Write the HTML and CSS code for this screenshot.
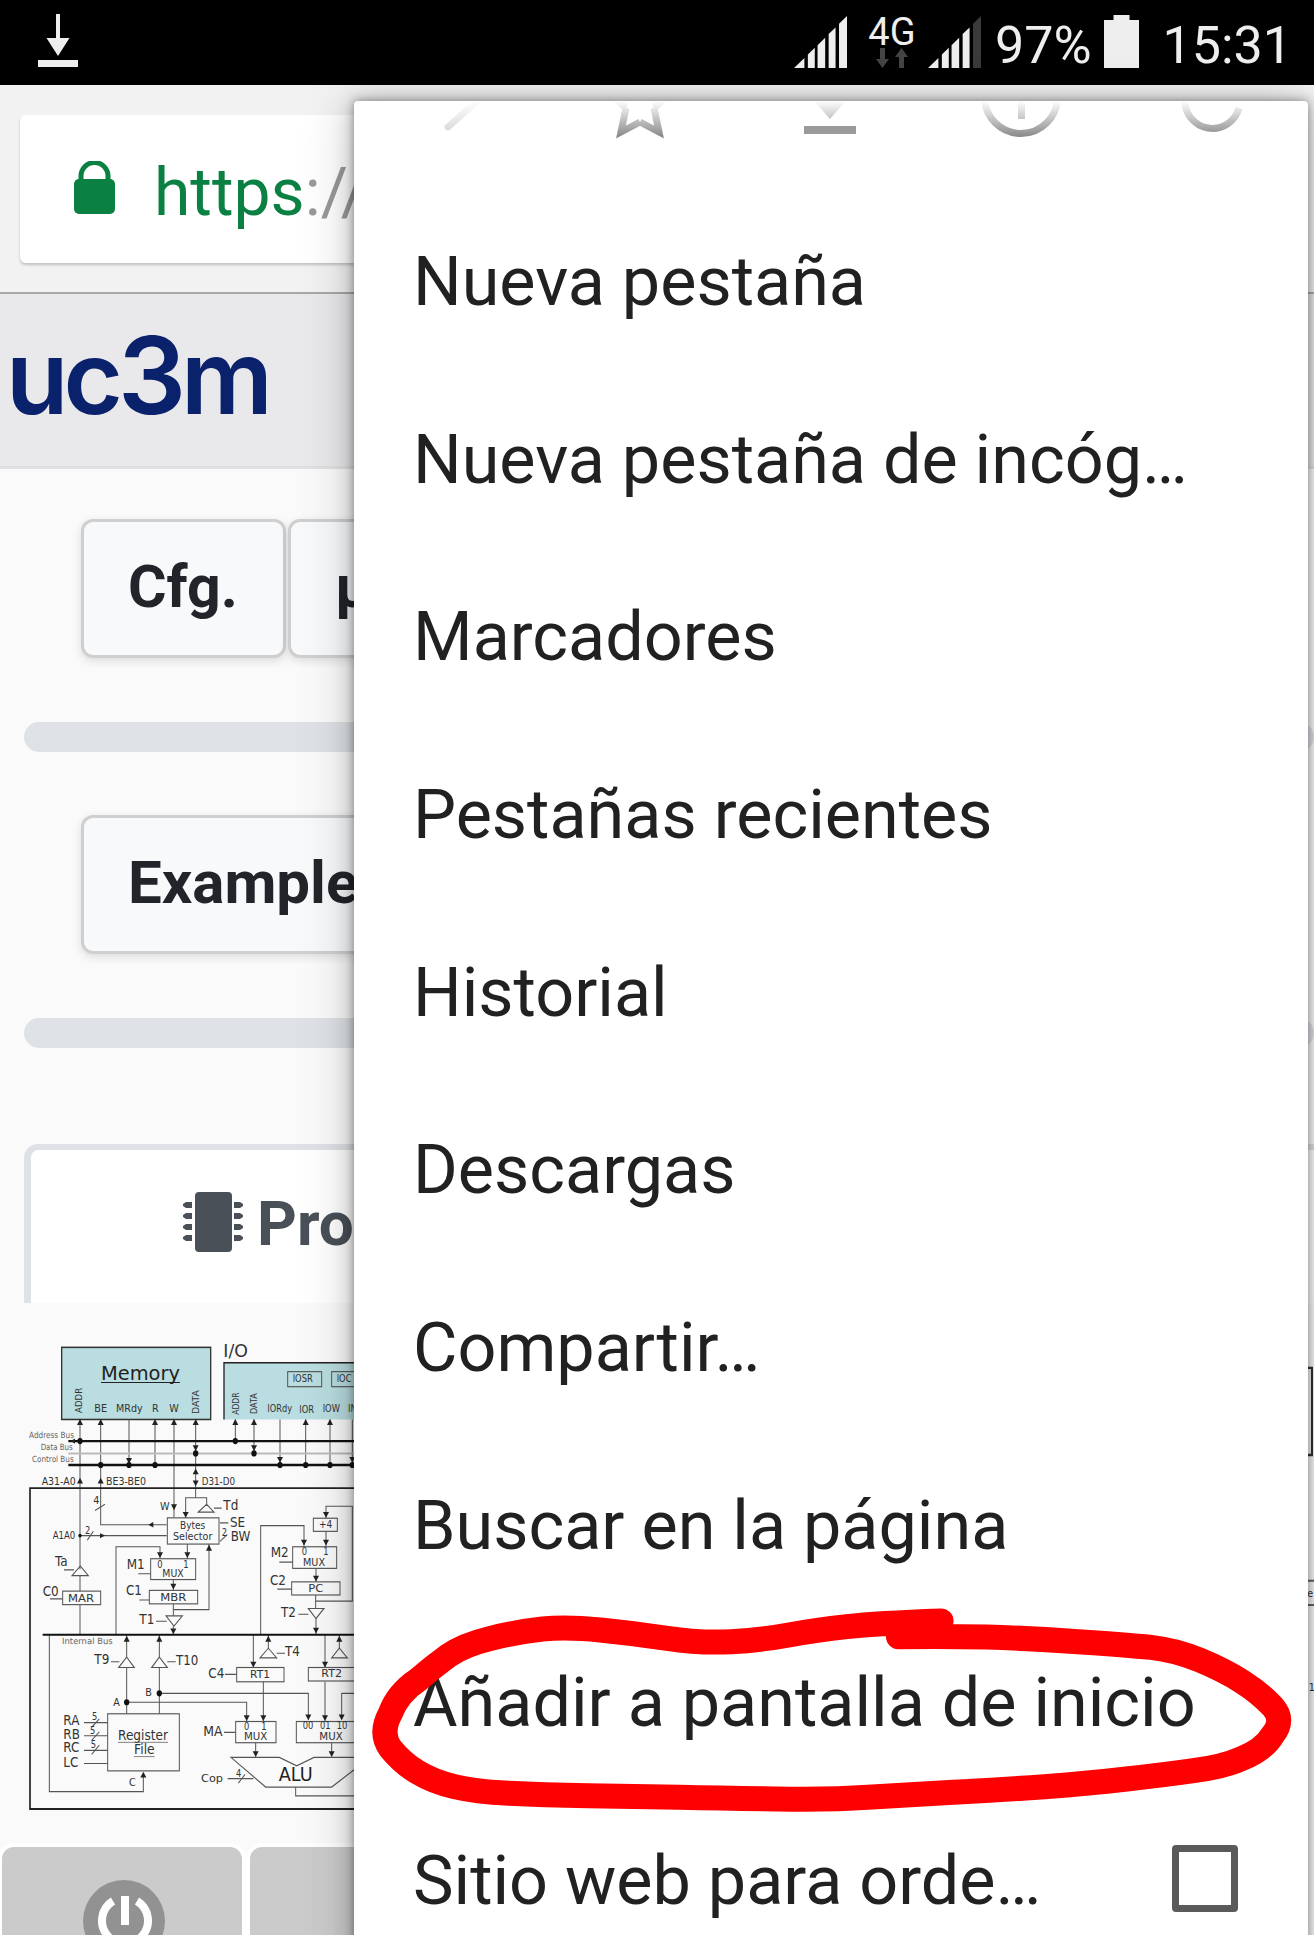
FILE: index.html
```html
<!DOCTYPE html>
<html lang="es">
<head>
  <meta charset="UTF-8">
  <title>Añadir a pantalla de inicio</title>
  <link rel="stylesheet" href="styles.css">
</head>
<body>

  <div class="status-bar">
    <svg class="status-download" viewBox="0 0 40 54" width="40" height="54">
      <path d="M18 0h4v24h9.500L20 42 8.500 24H18z" fill="#eee"/>
      <rect x="0" y="46" width="40" height="7" fill="#eee"/>
    </svg>
    <div class="status-right">
      <svg class="status-signal" viewBox="0 0 153 155" preserveAspectRatio="none">
        <path d="M0 155 30 125V155ZM40 115 60 95V155H40ZM68 87 90 65V155H68ZM100 54 120 34V155H100ZM130 23 153 0V155H130Z" fill="#eee"/>
      </svg>
      <div class="status-net">
        <span class="status-net-label">4G</span>
        <svg class="status-arrows" viewBox="0 0 32 20" width="32" height="20">
          <path d="M4 0h5v11h4L6.500 20 0 11h4zM23 20h5V9h4L25.500 0 19 9h4z" fill="#444"/>
        </svg>
      </div>
      <svg class="status-signal status-signal-two" viewBox="0 0 153 155" preserveAspectRatio="none">
        <path d="M0 155 30 125V155ZM40 115 60 95V155H40ZM68 87 90 65V155H68ZM100 54 120 34V155H100Z" fill="#eee"/>
        <path d="M130 23 153 0V155H130Z" fill="#3a3a3a"/>
      </svg>
      <span class="status-text status-percent">97%</span>
      <svg class="status-battery" viewBox="0 0 35 53" width="35" height="53">
        <path d="M9.500 0h16v5H35v48H0V5h9.500z" fill="#eee"/>
      </svg>
      <span class="status-text status-time">15:31</span>
    </div>
  </div>

  <div class="toolbar">
    <div class="url-box">
      <svg class="url-lock" viewBox="0 0 41 53" width="41" height="53">
        <path d="M7 20v-5a13.500 13.500 0 0 1 27 0v5" fill="none" stroke="#0b8043" stroke-width="5"/>
        <rect x="0" y="18" width="41" height="35" rx="5" fill="#0b8043"/>
      </svg>
      <span class="url-text"><span class="url-scheme">https</span>://</span>
    </div>
  </div>

  <div class="brand-band">
    <span class="brand-logo">uc<span class="brand-three">3</span>m</span>
  </div>

  <div class="page">
    <div class="btn-row">
      <div class="tool-btn">Cfg.</div>
      <div class="tool-btn tool-btn-second">µ</div>
    </div>
    <div class="progress-bar"></div>
    <div class="btn-row">
      <div class="tool-btn tool-btn-wide">Example</div>
    </div>
    <div class="progress-bar"></div>

    <div class="card-title">
      <svg class="chip-icon" viewBox="0 0 60 60" width="60" height="60">
        <rect x="12" y="0" width="37" height="60" rx="4" fill="#495057"/>
        <path d="M0 12 3 10H9V16H3L0 14ZM0 23 3 21H9V27H3L0 25ZM0 34 3 32H9V38H3L0 36ZM0 45 3 43H9V49H3L0 47ZM60 12 57 10H51V16H57L60 14ZM60 23 57 21H51V27H57L60 25ZM60 34 57 32H51V38H57L60 36ZM60 45 57 43H51V49H57L60 47Z" fill="#495057"/>
      </svg>
      <span>Proc</span>
    </div>

    <svg class="diagram" viewBox="0 0 3942 1330" preserveAspectRatio="none">
      <defs>
        <path id="up" d="M0 -9 9 6H-9Z" fill="#222"/>
        <path id="down" d="M0 9 9 -6H-9Z" fill="#222"/>
      </defs>

      <rect x="185" y="45" width="447" height="187" fill="#b9dde0" stroke="#333" stroke-width="4"/>
      <path d="M672 85V232H1100V85Z" fill="#b9dde0"/>
      <path d="M672 232V85H1100" fill="none" stroke="#222" stroke-width="4"/>

      <g fill="none" stroke="#555" stroke-width="3">
        <rect x="863" y="108" width="102" height="39"/>
        <rect x="995" y="108" width="100" height="39"/>
        <path d="M240 232V620M240 637V677M240 712V790"/>
        <path d="M302 232V505H500"/>
        <path d="M387 232V350M465 232V350M522 232V485M587 232V435"/>
        <path d="M706 232V288M762 232V320M840 232V350M917 232V350M990 232V350M1057 232V350"/>
        <path d="M557 487V435H620V452M642 462H665"/>
        <path d="M240 533H500M660 500H685M192 622H222M150 697H188"/>
        <path d="M148 790V1197H430V1150"/>
        <path d="M415 632H452M418 700H448"/>
        <path d="M348 790V562H480V593M562 555V593M520 647V675"/>
        <path d="M520 710V741M520 768V790M468 755H500M627 555V725H520"/>
        <path d="M333 860H358M502 860H527M380 790V848M380 875V995M478 790V848M478 875V995"/>
        <path d="M380 965H740V1015M478 942H925V1010"/>
        <path d="M252 1018H323M252 1052H323M252 1090H323M252 1124H323"/>
        <path d="M672 1043H707M767 1070V1105M790 912V1015"/>
        <path d="M805 790V825M855 838H830M675 893H710M760 790V875"/>
        <path d="M838 602H878M782 790V507H912V562M978 522V562M978 488V457H1057V703H947M832 672H875M948 618V653M947 687V722M895 737H925M948 748V790"/>
        <path d="M975 790V875M1018 790V825M975 912V1015M1025 1010V942H1100M995 1070V1105"/>
        <path d="M683 1163H760M887 1185V1208H1100"/>
        <path d="M285 468 315 452M262 545 280 522M275 1030 298 1008M275 1064 298 1042M275 1100 298 1076M715 1175 735 1152M660 548 682 530"/>
        <rect x="502" y="487" width="155" height="68"/>
        <rect x="188" y="677" width="114" height="35"/>
        <rect x="452" y="593" width="135" height="54"/>
        <rect x="448" y="675" width="145" height="35"/>
        <rect x="323" y="995" width="215" height="148"/>
        <rect x="707" y="1015" width="121" height="55"/>
        <rect x="710" y="875" width="142" height="37"/>
        <rect x="878" y="562" width="132" height="56"/>
        <rect x="940" y="488" width="72" height="34"/>
        <rect x="875" y="653" width="145" height="34"/>
        <rect x="925" y="875" width="175" height="35"/>
        <rect x="889" y="1015" width="211" height="55"/>
        <path d="M595 472 620 452 642 472ZM216 637 241 612 265 637ZM498 741H547L522 768ZM356 875 380 848 403 875ZM455 875 478 848 502 875ZM780 850 805 825 830 850ZM925 722H972L948 748ZM995 850 1018 825 1042 850Z"/>
        <path d="M693 1108H838L890 1130 942 1108H1100V1115L995 1185H797Z"/>
      </g>

      <path d="M205 288H1100M205 350H1100" fill="none" stroke="#111" stroke-width="6"/>
      <path d="M205 320H1100" fill="none" stroke="#bbb" stroke-width="5"/>
      <path d="M128 790H1100" fill="none" stroke="#111" stroke-width="5"/>
      <path d="M1100 410H90V1242H1100" fill="none" stroke="#222" stroke-width="5"/>

      <g fill="#111">
        <circle cx="240" cy="288" r="8"/><circle cx="706" cy="288" r="8"/>
        <circle cx="587" cy="320" r="8"/><circle cx="762" cy="320" r="8"/>
        <circle cx="302" cy="350" r="8"/><circle cx="387" cy="350" r="8"/>
        <circle cx="465" cy="350" r="8"/><circle cx="840" cy="350" r="8"/>
        <circle cx="917" cy="350" r="8"/><circle cx="990" cy="350" r="8"/>
        <circle cx="1057" cy="350" r="8"/>
        <circle cx="380" cy="965" r="8"/><circle cx="478" cy="942" r="8"/>
        <circle cx="240" cy="533" r="5"/>
      </g>

      <use href="#up" x="240" y="240"/><use href="#up" x="302" y="240"/>
      <use href="#up" x="465" y="240"/><use href="#up" x="522" y="240"/>
      <use href="#up" x="587" y="240"/><use href="#up" x="706" y="240"/>
      <use href="#up" x="762" y="240"/><use href="#up" x="917" y="240"/>
      <use href="#up" x="990" y="240"/>
      <use href="#down" x="387" y="338"/><use href="#down" x="587" y="305"/>
      <use href="#down" x="762" y="305"/><use href="#down" x="840" y="335"/>
      <use href="#down" x="1057" y="335"/>
      <use href="#up" x="240" y="392"/><use href="#up" x="302" y="392"/>
      <use href="#up" x="587" y="368"/><use href="#down" x="587" y="396"/>
      <use href="#down" x="522" y="458"/><use href="#down" x="557" y="478"/>
      <use href="#down" x="480" y="582"/><use href="#down" x="562" y="582"/>
      <use href="#down" x="520" y="664"/><use href="#down" x="520" y="780"/>
      <use href="#up" x="627" y="566"/><use href="#up" x="380" y="802"/>
      <use href="#up" x="478" y="802"/><use href="#down" x="740" y="1005"/>
      <use href="#down" x="925" y="1003"/><use href="#up" x="430" y="1154"/>
      <use href="#down" x="767" y="1098"/><use href="#down" x="790" y="1005"/>
      <use href="#up" x="805" y="802"/><use href="#down" x="760" y="866"/>
      <use href="#down" x="912" y="550"/><use href="#down" x="978" y="550"/>
      <use href="#down" x="978" y="478"/><use href="#down" x="948" y="643"/>
      <use href="#down" x="948" y="778"/><use href="#down" x="975" y="866"/>
      <use href="#up" x="1018" y="802"/><use href="#down" x="975" y="1005"/>
      <use href="#down" x="1025" y="1003"/><use href="#down" x="995" y="1098"/>
      <path d="M445 505 460 498V512ZM315 533 300 527V540ZM212 288 225 281V295Z" fill="#222"/>

      <g class="dg-text">
        <text class="dg-big" x="303" y="130" textLength="237" lengthAdjust="spacingAndGlyphs">Memory</text>
        <path d="M303 136H540" stroke="#222" stroke-width="3"/>
        <text class="dg-large" x="670" y="70" textLength="74" lengthAdjust="spacingAndGlyphs">I/O</text>
        <text class="dg-small" x="283" y="213">BE</text>
        <text class="dg-small" x="348" y="213" textLength="80" lengthAdjust="spacingAndGlyphs">MRdy</text>
        <text class="dg-small" x="456" y="213">R</text>
        <text class="dg-small" x="508" y="213">W</text>
        <text class="dg-tiny" x="878" y="136">IOSR</text>
        <text class="dg-tiny" x="1010" y="136">IOC</text>
        <text class="dg-tiny" x="802" y="213" textLength="74" lengthAdjust="spacingAndGlyphs">IORdy</text>
        <text class="dg-tiny" x="898" y="215">IOR</text>
        <text class="dg-tiny" x="968" y="213">IOW</text>
        <text class="dg-tiny" x="1044" y="213">IN</text>
        <text class="dg-tiny" transform="translate(245 215) rotate(-90)" textLength="65" lengthAdjust="spacingAndGlyphs">ADDR</text>
        <text class="dg-tiny" transform="translate(596 218) rotate(-90)" textLength="62" lengthAdjust="spacingAndGlyphs">DATA</text>
        <text class="dg-tiny" transform="translate(716 220) rotate(-90)" textLength="58" lengthAdjust="spacingAndGlyphs">ADDR</text>
        <text class="dg-tiny" transform="translate(772 218) rotate(-90)" textLength="54" lengthAdjust="spacingAndGlyphs">DATA</text>
        <text class="dg-bus" x="87" y="280" textLength="135" lengthAdjust="spacingAndGlyphs">Address Bus</text>
        <text class="dg-bus" x="122" y="311" textLength="96" lengthAdjust="spacingAndGlyphs">Data Bus</text>
        <text class="dg-bus" x="96" y="342" textLength="125" lengthAdjust="spacingAndGlyphs">Control Bus</text>
        <text class="dg-small" x="125" y="401" textLength="102" lengthAdjust="spacingAndGlyphs">A31-A0</text>
        <text class="dg-small" x="318" y="401" textLength="120" lengthAdjust="spacingAndGlyphs">BE3-BE0</text>
        <text class="dg-small" x="605" y="401" textLength="100" lengthAdjust="spacingAndGlyphs">D31-D0</text>
        <text class="dg-small" x="280" y="452">4</text>
        <text class="dg-small" x="480" y="468">W</text>
        <text class="dg-mid" x="670" y="468">Td</text>
        <text class="dg-small" x="540" y="515" textLength="76" lengthAdjust="spacingAndGlyphs">Bytes</text>
        <text class="dg-small" x="519" y="545" textLength="118" lengthAdjust="spacingAndGlyphs">Selector</text>
        <text class="dg-mid" x="690" y="510">SE</text>
        <text class="dg-mid" x="692" y="548">BW</text>
        <text class="dg-small" x="158" y="543" textLength="68" lengthAdjust="spacingAndGlyphs">A1A0</text>
        <text class="dg-tiny" x="255" y="530">2</text>
        <text class="dg-tiny" x="665" y="535">2</text>
        <text class="dg-mid" x="165" y="612">Ta</text>
        <text class="dg-mid" x="128" y="690">C0</text>
        <text class="dg-small" x="204" y="704" textLength="78" lengthAdjust="spacingAndGlyphs">MAR</text>
        <text class="dg-mid" x="380" y="620">M1</text>
        <text class="dg-mid" x="378" y="688">C1</text>
        <text class="dg-tiny" x="472" y="616">0</text>
        <text class="dg-tiny" x="550" y="616">1</text>
        <text class="dg-small" x="487" y="640" textLength="64" lengthAdjust="spacingAndGlyphs">MUX</text>
        <text class="dg-small" x="481" y="702" textLength="78" lengthAdjust="spacingAndGlyphs">MBR</text>
        <text class="dg-mid" x="418" y="763">T1</text>
        <text class="dg-bus" x="186" y="813" textLength="152" lengthAdjust="spacingAndGlyphs">Internal Bus</text>
        <text class="dg-mid" x="283" y="866">T9</text>
        <text class="dg-mid" x="528" y="868" textLength="67" lengthAdjust="spacingAndGlyphs">T10</text>
        <text class="dg-small" x="436" y="950">B</text>
        <text class="dg-small" x="340" y="975">A</text>
        <text class="dg-mid" x="190" y="1025">RA</text>
        <text class="dg-mid" x="190" y="1060">RB</text>
        <text class="dg-mid" x="190" y="1095">RC</text>
        <text class="dg-mid" x="190" y="1132">LC</text>
        <text class="dg-tiny" x="276" y="1012">5</text>
        <text class="dg-tiny" x="270" y="1047">5</text>
        <text class="dg-tiny" x="272" y="1083">5</text>
        <text class="dg-mid" x="354" y="1063" textLength="150" lengthAdjust="spacingAndGlyphs">Register</text>
        <path d="M354 1069H504M402 1106H464" stroke="#555" stroke-width="2"/>
        <text class="dg-mid" x="402" y="1100" textLength="62" lengthAdjust="spacingAndGlyphs">File</text>
        <text class="dg-small" x="387" y="1183">C</text>
        <text class="dg-mid" x="610" y="1052" textLength="58" lengthAdjust="spacingAndGlyphs">MA</text>
        <text class="dg-tiny" x="732" y="1036">0</text>
        <text class="dg-tiny" x="784" y="1036">1</text>
        <text class="dg-small" x="732" y="1063" textLength="70" lengthAdjust="spacingAndGlyphs">MUX</text>
        <text class="dg-mid" x="855" y="845">T4</text>
        <text class="dg-small" x="750" y="903" textLength="60" lengthAdjust="spacingAndGlyphs">RT1</text>
        <text class="dg-mid" x="625" y="902">C4</text>
        <text class="dg-mid" x="812" y="588">M2</text>
        <text class="dg-tiny" x="905" y="584">0</text>
        <text class="dg-tiny" x="970" y="584">1</text>
        <text class="dg-small" x="909" y="611" textLength="66" lengthAdjust="spacingAndGlyphs">MUX</text>
        <text class="dg-small" x="957" y="514" textLength="40" lengthAdjust="spacingAndGlyphs">+4</text>
        <text class="dg-mid" x="810" y="662">C2</text>
        <text class="dg-small" x="925" y="680" textLength="45" lengthAdjust="spacingAndGlyphs">PC</text>
        <text class="dg-mid" x="843" y="745">T2</text>
        <text class="dg-small" x="964" y="900" textLength="62" lengthAdjust="spacingAndGlyphs">RT2</text>
        <text class="dg-tiny" x="908" y="1034">00</text>
        <text class="dg-tiny" x="960" y="1034">01</text>
        <text class="dg-tiny" x="1010" y="1034">10</text>
        <text class="dg-small" x="958" y="1063" textLength="70" lengthAdjust="spacingAndGlyphs">MUX</text>
        <text class="dg-big" x="836" y="1170" textLength="102" lengthAdjust="spacingAndGlyphs">ALU</text>
        <text class="dg-small" x="603" y="1172" textLength="66" lengthAdjust="spacingAndGlyphs">Cop</text>
        <text class="dg-tiny" x="708" y="1160">4</text>
      </g>

      <!-- bits of the diagram that show past the menu -->
      <path d="M3915 98H3936V324H3915" fill="none" stroke="#333" stroke-width="6"/>
      <path d="M3915 650H3942M3915 713H3942" fill="none" stroke="#666" stroke-width="5"/>
      <text class="dg-small" x="3922" y="692">e</text>
      <text class="dg-small" x="3926" y="935">1</text>
    </svg>

    <div class="tile-row">
      <div class="tile">
        <svg class="tile-power" viewBox="0 0 82 82" width="82" height="82">
          <circle cx="41" cy="41" r="41" fill="#929292"/>
          <path d="M30 21a23 23 0 1 0 24 0" fill="none" stroke="#fff" stroke-width="8"/>
          <rect x="38" y="16" width="8" height="29" fill="#fff"/>
        </svg>
      </div>
      <div class="tile"></div>
    </div>
  </div>

  <!-- chrome overflow menu, scrolled a little so the icon row is cut off -->
  <div class="menu">
    <svg class="menu-icons" viewBox="354 101 954 40" width="954" height="40">
      <defs>
        <linearGradient id="iconFade" gradientUnits="userSpaceOnUse" x1="0" y1="101" x2="0" y2="136">
          <stop offset="0" stop-color="#fff"/>
          <stop offset="1" stop-color="#8c8c8c"/>
        </linearGradient>
        <linearGradient id="slashFade" gradientUnits="userSpaceOnUse" x1="0" y1="101" x2="0" y2="130">
          <stop offset="0" stop-color="#fff"/>
          <stop offset="1" stop-color="#dcdcdc"/>
        </linearGradient>
      </defs>
      <path d="M476 102 448 127" fill="none" stroke="url(#slashFade)" stroke-width="7" stroke-linecap="round"/>
      <path d="M640 122 621 132 626 108M640 122 659 132 654 108M626 108 612 96M654 108 668 96" fill="none" stroke="url(#iconFade)" stroke-width="7"/>
      <path d="M814 101H846L830 119Z" fill="url(#iconFade)"/>
      <rect x="804" y="126" width="52" height="8" fill="#9a9a9a"/>
      <circle cx="1021" cy="97" r="36.500" fill="none" stroke="url(#iconFade)" stroke-width="7"/>
      <rect x="1018" y="95" width="7" height="24" fill="url(#iconFade)"/>
      <path d="M1185 99a27.500 27.500 0 0 0 54 9" fill="none" stroke="url(#iconFade)" stroke-width="7"/>
    </svg>
    <div class="menu-item">Nueva pestaña</div>
    <div class="menu-item">Nueva pestaña de incóg…</div>
    <div class="menu-item">Marcadores</div>
    <div class="menu-item">Pestañas recientes</div>
    <div class="menu-item">Historial</div>
    <div class="menu-item">Descargas</div>
    <div class="menu-item">Compartir…</div>
    <div class="menu-item">Buscar en la página</div>
    <div class="menu-item">Añadir a pantalla de inicio</div>
    <div class="menu-item menu-item-check">
      <span>Sitio web para orde…</span>
      <span class="menu-checkbox"></span>
    </div>
  </div>

  <!-- red marker drawn over the screenshot -->
  <svg class="scribble" viewBox="0 0 1568 1125" preserveAspectRatio="none">
    <path d="M955 183Q850 190 800 200Q750 210 705 225Q660 240 610 245Q560 250 505 235Q450 220 395 210Q340 200 300 207Q260 215 215 235Q170 255 145 287Q120 320 95 360Q62 400 50 460Q32 520 50 565Q70 610 95 637Q120 665 155 680Q190 695 245 700Q300 705 375 707Q450 710 525 712Q600 715 685 717Q770 720 835 712Q900 705 975 697Q1050 690 1125 680Q1200 670 1260 657Q1320 645 1370 632Q1420 620 1450 595Q1485 570 1500 525Q1520 480 1500 440Q1480 400 1450 365Q1420 330 1380 300Q1340 270 1300 262Q1260 255 1180 245Q1100 235 1030 231Q960 228 885 230" fill="none" stroke="#fe0000" stroke-width="25" stroke-linecap="round" vector-effect="non-scaling-stroke"/>
  </svg>

</body>
</html>
```

FILE: styles.css
```css
html, body {
  margin: 0;
  height: 1935px;
  overflow: hidden;
}

body {
  position: relative;
  font-family: 'Roboto', sans-serif;
  background-color: #fafafa;
  color: #212529;
}

.status-bar {
  height: 85px;
  background-color: black;
  display: flex;
  justify-content: space-between;
  padding: 14px 22px 0 38px;
  box-sizing: border-box;
}

.status-right {
  display: flex;
  align-items: flex-start;
}

.status-signal {
  width: 53px;
  height: 52px;
  margin-top: 2px;
}

.status-signal-two {
  margin-left: 13px;
}

.status-net {
  width: 46px;
  margin: 2px 0 0 22px;
  display: flex;
  flex-direction: column;
  align-items: center;
}

.status-net-label {
  font-size: 38px;
  line-height: 32px;
  color: #eee;
}

.status-arrows {
  display: block;
}

.status-text {
  font-size: 52px;
  line-height: 60px;
  color: #eee;
  margin-top: 2px;
}

.status-percent {
  margin-left: 14px;
}

.status-battery {
  margin: 1px 0 0 12px;
}

.status-time {
  margin-left: 24px;
}

.toolbar {
  height: 209px;
  box-sizing: border-box;
  background-color: #f2f2f2;
  padding: 30px 0 0 20px;
  border-bottom: 2px solid #a8a8a8;
}

.url-box {
  width: 1200px;
  height: 148px;
  background-color: white;
  border-radius: 6px;
  box-shadow: 0 2px 3px rgba(0, 0, 0, 0.2);
  display: flex;
  align-items: center;
  padding-left: 54px;
  box-sizing: border-box;
}

.url-lock {
  margin-top: -4px;
}

.url-text {
  font-size: 66px;
  color: #999;
  margin: 6px 0 0 39px;
}

.url-scheme {
  color: #0b8043;
}

.brand-band {
  height: 175px;
  box-sizing: border-box;
  background-color: #e9e9eb;
  border-bottom: 3px solid #e0e0e2;
  padding: 0 0 10px 6px;
  display: flex;
  align-items: center;
}

.brand-logo {
  font-family: 'Inter', sans-serif;
  font-size: 102px;
  font-weight: 600;
  letter-spacing: -5px;
  line-height: 1;
  color: #0a216b;
}

.brand-three {
  font-size: 107px;
}

.btn-row {
  display: flex;
  gap: 2px;
  padding-left: 81px;
  margin-top: 50px;
}

.tool-btn {
  width: 205px;
  height: 139px;
  box-sizing: border-box;
  background-color: #f8f9fb;
  border: 3px solid #cfcfcf;
  border-radius: 12px;
  box-shadow: 0 3px 10px rgba(0, 0, 0, 0.12);
  font-size: 59px;
  font-weight: 700;
  line-height: 129px;
  padding-left: 44px;
}

.tool-btn-wide {
  width: 500px;
  margin-top: 13px;
  font-size: 60px;
}

.progress-bar {
  height: 30px;
  margin: 64px 0 0 24px;
  background-color: #dee2e6;
  border-radius: 15px;
}

.card-title {
  height: 159px;
  margin: 96px 0 0 24px;
  box-sizing: border-box;
  background-color: white;
  border-top: 6px solid #dee2e6;
  border-left: 7px solid #dee2e6;
  border-top-left-radius: 14px;
  display: flex;
  align-items: flex-start;
  padding: 42px 0 0 152px;
  gap: 14px;
  font-size: 62px;
  font-weight: 700;
  line-height: 64px;
  color: #495057;
}

.chip-icon {
  flex: none;
}

.diagram {
  display: block;
  width: 1314px;
  height: 513px;
  margin-top: 27px;
}

.diagram text {
  font-family: 'DejaVu Sans', sans-serif;
  fill: #333;
}

.diagram .dg-big {
  font-size: 52px;
  fill: #222;
}

.diagram .dg-large {
  font-size: 46px;
}

.diagram .dg-mid {
  font-size: 36px;
}

.diagram .dg-small {
  font-size: 29px;
}

.diagram .dg-tiny {
  font-size: 25px;
}

.diagram .dg-bus {
  font-size: 22px;
  fill: #666;
}

.tile-row {
  display: flex;
  margin-left: -2px;
}

.tile {
  width: 248px;
  height: 120px;
  flex: none;
  box-sizing: border-box;
  background-color: #cbcbcb;
  border: 4px solid white;
  border-radius: 16px;
  padding: 33px 0 0 81px;
}

.tile-power {
  display: block;
}

.menu {
  position: absolute;
  left: 354px;
  top: 101px;
  width: 954px;
  height: 1834px;
  overflow: hidden;
  background-color: white;
  border-radius: 4px 4px 0 0;
}

.menu-icons {
  display: block;
  margin-bottom: 52px;
}

body::after {
  content: "";
  position: absolute;
  left: 354px;
  top: 101px;
  width: 954px;
  height: 1900px;
  border-radius: 4px;
  box-shadow: 0 0 8px rgba(0, 0, 0, 0.34), 0 0 22px rgba(0, 0, 0, 0.22), -10px 0 48px rgba(0, 0, 0, 0.14);
  pointer-events: none;
}

.menu-item {
  height: 177.7px;
  display: flex;
  align-items: center;
  padding-left: 59px;
  font-size: 68.3px;
  color: #212121;
}

.menu-item-check {
  justify-content: space-between;
  padding-right: 70px;
}

.menu-checkbox {
  width: 66px;
  height: 67px;
  box-sizing: border-box;
  border: 7px solid #5a5a5a;
  border-radius: 4px;
  margin-top: -6px;
}

.scribble {
  position: absolute;
  left: 360px;
  top: 1560px;
  width: 954px;
  height: 375px;
}
```
